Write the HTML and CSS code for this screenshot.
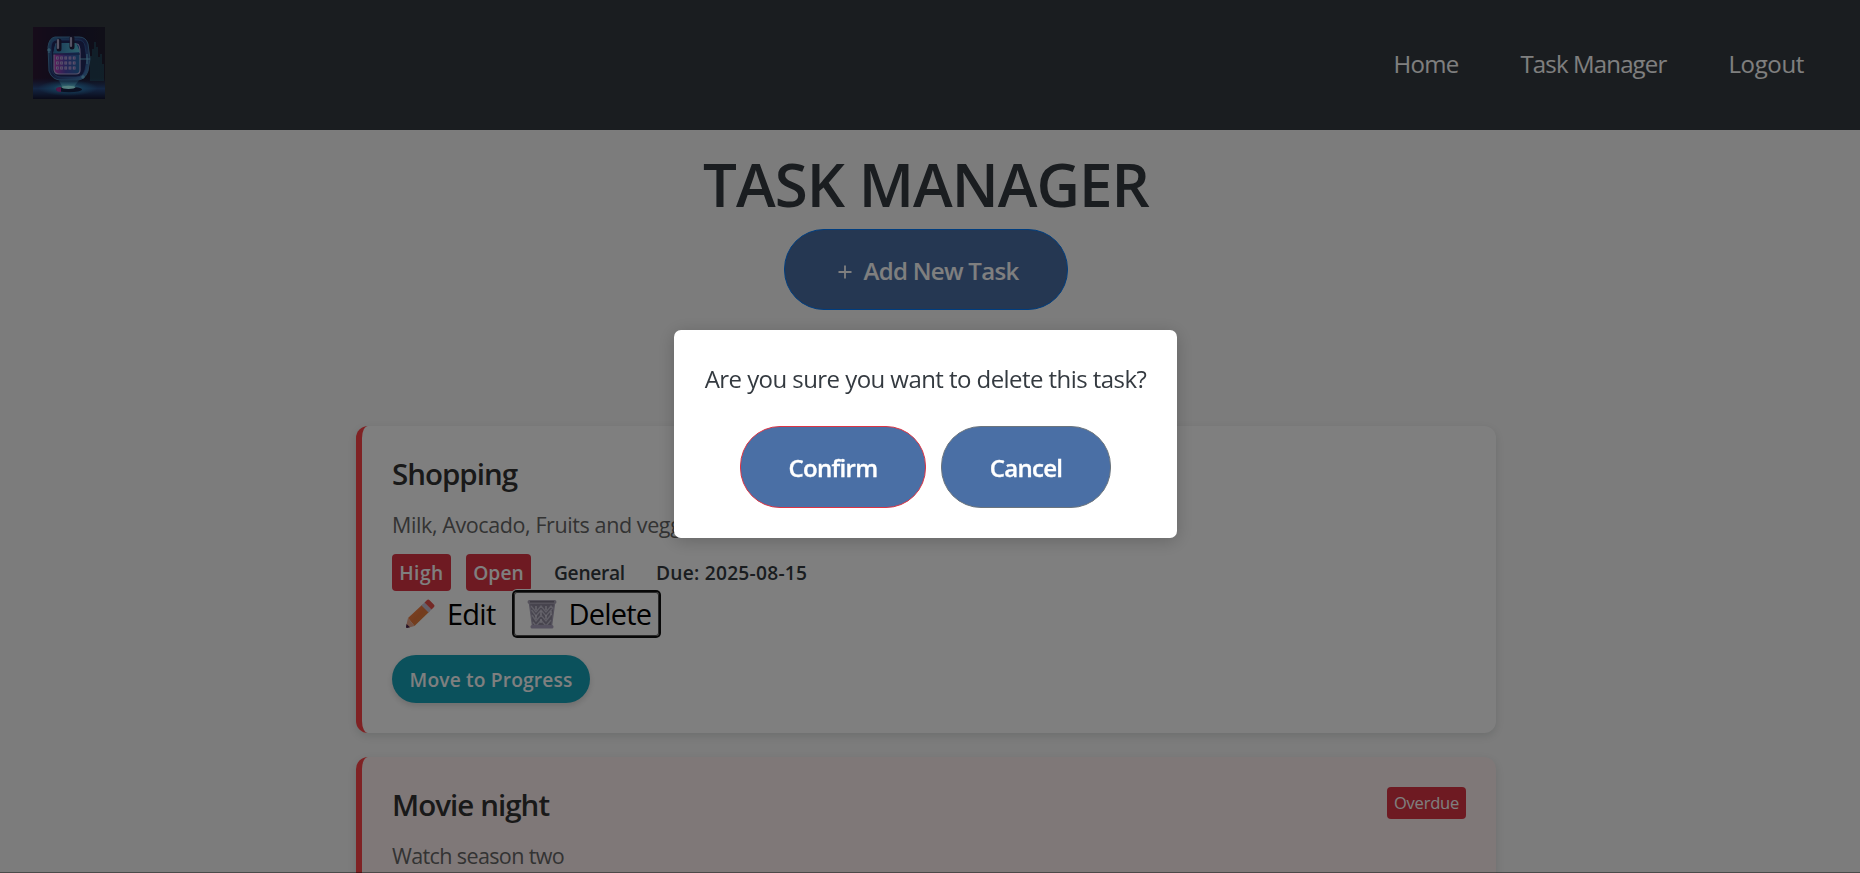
FILE: index.html
```html
<!DOCTYPE html>
<html lang="en">
<head>
<meta charset="utf-8">
<title>Task Manager</title>
<link rel="stylesheet" href="styles.css">
</head>
<body>
<nav class="navbar">
  <svg class="logo" viewBox="0 0 72 72" aria-hidden="true">
    <defs>
      <linearGradient id="bg" x1="0" y1="0" x2="1" y2="0"><stop offset="0" stop-color="#2e1834"/><stop offset=".5" stop-color="#1c1836"/><stop offset="1" stop-color="#211f30"/></linearGradient>
      <linearGradient id="floor" x1="0" y1="0" x2="0" y2="1"><stop offset="0" stop-color="#20386a" stop-opacity="0"/><stop offset=".5" stop-color="#284c86"/><stop offset="1" stop-color="#141531"/></linearGradient>
      <linearGradient id="body" x1="0" y1="0" x2="1" y2="0"><stop offset="0" stop-color="#c03cb4"/><stop offset=".45" stop-color="#4b47ad"/><stop offset="1" stop-color="#246ca7"/></linearGradient>
      <linearGradient id="shell" x1="0" y1="0" x2="1" y2="1"><stop offset="0" stop-color="#3574a6"/><stop offset=".5" stop-color="#26346e"/><stop offset="1" stop-color="#4b8bc4"/></linearGradient>
      <linearGradient id="head" x1="0" y1="0" x2="1" y2="0"><stop offset="0" stop-color="#3474ae"/><stop offset="1" stop-color="#5cc3da"/></linearGradient>
      <linearGradient id="beam" x1="0" y1="0" x2="0" y2="1"><stop offset="0" stop-color="#2867a4" stop-opacity=".3"/><stop offset="1" stop-color="#7cebf0"/></linearGradient>
      <radialGradient id="glow"><stop offset="0" stop-color="#70e6f0"/><stop offset=".5" stop-color="#2c83ba" stop-opacity=".65"/><stop offset="1" stop-color="#2c83ba" stop-opacity="0"/></radialGradient>
    </defs>
    <rect width="72" height="72" fill="url(#bg)"/>
    <rect y="51" width="72" height="21" fill="url(#floor)"/>
    <path d="M58 54V29M60 54V22M62 54V15M64 54V20M66 54V30M68 54V27M70 54V37" stroke="#276b7c" stroke-width="1.2" opacity=".75"/>
    <ellipse cx="35" cy="61" rx="30" ry="8" fill="url(#glow)"/>
    <path d="M22 10h24q7 0 9 7l2 15-2 12q-3 9-11 9H28q-9 0-12-9l-1-24q1-9 7-10z" fill="url(#shell)" stroke="#497fac" stroke-width="1"/>
    <path d="M23 13h22q6 0 7 6l2 14-2 10q-2 7-9 7H28q-7 0-9-7l-1-22q0-7 5-8z" fill="#20285e" stroke="#3560a3" stroke-width=".8"/>
    <path d="M25 52h22l-7 9H30z" fill="url(#beam)"/>
    <path d="M23 17h21q3 0 3 9v17q0 4-4 4H26q-5 0-5-5V27z" fill="url(#body)" stroke="#b1a6d8" stroke-width="1.2"/>
    <path d="M22 18q0-2 3-2h18l4 9-27 2z" fill="url(#head)"/>
    <path d="M20 27h27" stroke="#25316d" stroke-width="1"/>
    <path d="M23 31h20M23 36h20M23 41h20" stroke="#b8addd" stroke-width="2.8" stroke-dasharray="2.700 1.500"/>
    <path d="M24 31h19M24 36h19M24 41h19" stroke="#643b9c" stroke-width="1" stroke-dasharray="1 3.200"/>
    <path d="M26 14v8M39 11v9" stroke="#252042" stroke-width="5" stroke-linecap="round"/>
    <path d="M25 13v8M38 11v8" stroke="#aaa7c8" stroke-width="2.2" stroke-linecap="round"/>
    <path d="M47 32h10M54 27v10M14 23h4M16 21v5M48 50h4M50 48v4" stroke="#7ccfed" stroke-width=".8"/>
    <ellipse cx="36" cy="62.5" rx="13" ry="2.8" fill="#152044"/>
    <path d="M23 62q0-2 5-2v5q-5 0-5-3z" fill="#a52a8e"/>
    <ellipse cx="35.500" cy="60.300" rx="7" ry="1.6" fill="#a8ffff"/>
  </svg>
  <div class="nav-links">
    <a class="nav-home">Home</a>
    <a class="nav-tasks">Task Manager</a>
    <a class="nav-logout">Logout</a>
  </div>
</nav>

<main class="page">
  <h1 class="page-title">TASK MANAGER</h1>
  <button class="btn btn-add"><svg class="plus" viewBox="0 0 14 14"><path d="M7 .5v13M.5 7h13"/></svg>Add New Task</button>

  <section class="task-list">
    <article class="card">
      <div class="card-head"><h2 class="card-title">Shopping</h2></div>
      <p class="card-desc">Milk, Avocado, Fruits and veggies</p>
      <div class="meta">
        <span class="badge badge-high">High</span>
        <span class="badge badge-open">Open</span>
        <span class="meta-text">General</span>
        <span class="meta-text meta-due">Due: 2025-08-15</span>
      </div>
      <div class="actions">
        <button class="action">
          <svg class="icon" viewBox="0 0 30 30" aria-hidden="true">
            <defs>
              <linearGradient id="wood" x1="0" y1="0" x2="1" y2="1"><stop offset="0" stop-color="#ff8a4a"/><stop offset=".5" stop-color="#e8783c"/><stop offset="1" stop-color="#e09040"/></linearGradient>
            </defs>
            <path d="M3 19 17.500 5.500 24.500 12.500 9.500 27z" fill="url(#wood)"/>
            <path d="M3 19 1 27.500q0 1.800 2 1.300L9.500 27z" fill="#e8a48a"/>
            <path d="M1.600 25 1 28q0 1 1 1l3-.8z" fill="#48244c"/>
            <path d="m16.500 6.500 3-3 7 7-3 3z" fill="#c8c0d4"/>
            <path d="m19.500 3.500 2.300-2.300q1.400-1.400 2.800 0l4.200 4.200q1.400 1.400 0 2.800l-2.300 2.300z" fill="#e8524c"/>
          </svg>
          <span class="edit-label">Edit</span>
        </button>
        <button class="action action-focus">
          <svg class="icon" viewBox="0 0 30 30" aria-hidden="true">
            <path d="M2.500 4h25L24.500 27h-19z" fill="#8e899c"/>
            <path d="M4 7l5 6 5-6 5 6 5-6 2.500 3M4.500 11 9 17l5-6 5 6 6-7M5 16l4 6 5-6 5 6 5.500-7M6 23l3 4 5-6 5 6 5-6" fill="none" stroke="#c0bccd" stroke-width="1.400"/>
            <path d="M9 7v4M14 12v4M19 7v4M9 16v4M19 16v4M14 20v4M24 12v4" stroke="#dedbe8" stroke-width="1.200"/>
            <path d="M2.500 5 5.500 27M27.500 5l-3 22" stroke="#a8a2b8" stroke-width="1.300"/>
            <rect x=".5" y="1" width="29" height="4" rx="2" fill="#aaa5b6"/>
            <path d="M3 2.800h24" stroke="#6f6a7b" stroke-width="1.200"/>
            <rect x="3.500" y="26" width="23" height="3.500" rx="1.500" fill="#aaa3be"/>
          </svg>
          <span class="delete-label">Delete</span>
        </button>
      </div>
      <button class="btn-move">Move to Progress</button>
    </article>

    <article class="card card-overdue">
      <div class="card-head"><h2 class="card-title movie">Movie night</h2><span class="overdue">Overdue</span></div>
      <p class="card-desc watch">Watch season two</p>
    </article>
  </section>
</main>

<div class="overlay">
  <div class="modal" role="dialog">
    <p class="modal-text">Are you sure you want to delete this task?</p>
    <div class="modal-actions">
      <button class="btn btn-confirm">Confirm</button>
      <button class="btn btn-cancel">Cancel</button>
    </div>
  </div>
</div>
</body>
</html>
```
FILE: styles.css
```css
* { box-sizing: border-box; }

html, body { height: 100%; }

body {
  margin: 0;
  overflow: hidden;
  background: #f8f8f8;
  color: #343a40;
  font-family: "Open Sans", "Noto Sans", sans-serif;
}

h1, h2, p { margin: 0; }

button { font-family: inherit; margin: 0; }

.navbar {
  display: flex;
  justify-content: space-between;
  align-items: flex-start;
  height: 130px;
  padding: 27px 56px 0 33px;
  background: #343a40;
}

.logo { width: 72px; height: 72px; }

.nav-links {
  display: flex;
  gap: 62px;
  padding-top: 19px;
  color: #fff;
  font-size: 24px;
  line-height: 36px;
}

.nav-home { letter-spacing: -0.7px; }
.nav-tasks { letter-spacing: -0.85px; }
.nav-logout { letter-spacing: -0.35px; }

.page {
  display: flex;
  flex-direction: column;
  align-items: center;
  padding: 18px 8px 0 0;
}

.page-title {
  font-size: 60px;
  font-weight: 600;
  line-height: 72px;
  letter-spacing: -0.95px;
}

.btn {
  display: flex;
  align-items: center;
  justify-content: center;
  height: 82px;
  padding: 1px 0 0;
  border: 1px solid;
  border-radius: 40px;
  background: #4a6fa5;
  color: #fff;
  font-size: 24px;
  font-weight: 600;
  letter-spacing: -0.7px;
}

.btn-add {
  width: 284px;
  height: 81px;
  margin-top: 9px;
  padding: 2px 0 0 4px;
  gap: 12px;
  border-color: #007bff;
}

.plus {
  width: 14px;
  height: 14px;
  margin-top: 2px;
  fill: none;
  stroke: #fff;
  stroke-width: 1.8;
}

.task-list {
  display: flex;
  flex-direction: column;
  gap: 24px;
  width: 1140px;
  margin-top: 116px;
}

.card {
  display: flex;
  flex-direction: column;
  align-items: flex-start;
  padding: 30px;
  border-left: 6px solid #ff4548;
  border-radius: 12px;
  background: #fff;
  box-shadow: 0 3px 9px rgba(0, 30, 25, 0.12);
}

.card-overdue { background: #fff0f0; }

.card-head {
  display: flex;
  justify-content: space-between;
  align-items: flex-start;
  width: 100%;
}

.card-title {
  color: #333;
  font-size: 29.5px;
  font-weight: 600;
  line-height: 36px;
  letter-spacing: -1px;
}

.movie { letter-spacing: -0.95px; }

.card-desc {
  margin-top: 16px;
  color: #666;
  font-size: 21.5px;
  line-height: 33px;
  letter-spacing: -0.4px;
}

.watch { letter-spacing: -0.62px; }

.meta {
  display: flex;
  gap: 15px;
  margin-top: 13px;
  font-size: 19.2px;
  font-weight: 600;
  line-height: 37px;
}

.badge {
  border-radius: 4px;
  background: #dc3545;
  color: #fff;
  text-align: center;
}

.badge-high { width: 59px; letter-spacing: 0.5px; }
.badge-open { width: 65px; letter-spacing: 0.1px; }
.meta-text { padding: 0 8px; letter-spacing: -0.3px; }
.meta-due { letter-spacing: 0.25px; }

.actions {
  display: flex;
  gap: 10px;
  margin-top: 1px;
}

.action {
  display: flex;
  align-items: center;
  gap: 12px;
  height: 44px;
  padding: 0 8px 0 13px;
  border: 0;
  background: none;
  color: #000;
  font-size: 29px;
  line-height: 44px;
}

.action-focus {
  border-radius: 3px;
  background: #fff;
  box-shadow: inset 0 0 0 1px #555, 0 0 0 2px #101010, 0 0 0 3px #fff;
}

.icon { width: 30px; height: 30px; }
.edit-label { letter-spacing: -0.75px; }
.delete-label { letter-spacing: -0.8px; }

.btn-move {
  width: 198px;
  height: 48px;
  margin-top: 19px;
  padding: 0;
  border: 0;
  border-radius: 24px;
  background: #17a2b8;
  box-shadow: 0 3px 6px rgba(0, 0, 0, 0.14);
  color: #fff;
  font-size: 19.2px;
  font-weight: 600;
  letter-spacing: 0.15px;
}

.overdue {
  width: 79px;
  height: 32px;
  border-radius: 4px;
  background: #dc3545;
  color: #fff;
  font-size: 16.5px;
  line-height: 32px;
  letter-spacing: -0.2px;
  text-align: center;
}

.overlay {
  position: fixed;
  inset: 0;
  display: flex;
  justify-content: center;
  align-items: flex-start;
  padding: 330px 9px 0 0;
  border-bottom: 1px solid rgba(0, 0, 0, 0.4);
  background: rgba(0, 0, 0, 0.5);
}

.modal {
  width: 503px;
  height: 208px;
  padding-top: 31px;
  border-radius: 7px;
  background: #fff;
  box-shadow: 0 3px 18px rgba(0, 0, 0, 0.2);
}

.modal-text {
  font-size: 24px;
  line-height: 36px;
  letter-spacing: -0.56px;
  text-align: center;
}

.modal-actions {
  display: flex;
  justify-content: center;
  gap: 15px;
  margin-top: 29px;
}

.btn-confirm,
.btn-cancel { -webkit-text-stroke: 0.35px #fff; }

.btn-confirm { width: 186px; border-color: #dc3545; }
.btn-cancel { width: 170px; border-color: #6c757d; }
```
